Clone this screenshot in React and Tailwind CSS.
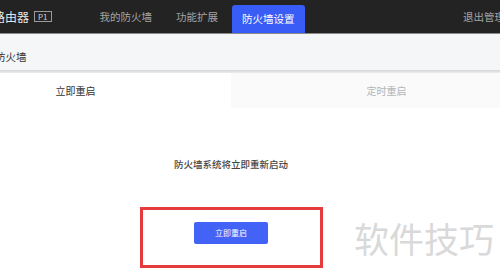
export default function App() {
  return (
    <div
      className="relative w-[500px] h-[277px] overflow-hidden bg-white"
      style={{ fontFamily: '"Noto Sans CJK SC", "Noto Sans", sans-serif' }}
    >
      {/* Top bar */}
      <header className="flex items-end h-[34px] bg-[#232323] border-b border-[#8a8a8a] whitespace-nowrap">
        <div className="flex items-center self-stretch ml-[-7px]">
          <span className="text-[12px] leading-none text-[#e6e6e6]">路由器</span>
          <span className="ml-[5px] px-[3px] border border-[#9a9a9a] text-[8px] leading-[9px] text-[#cfcfcf]">P1</span>
        </div>
        <nav className="flex items-end ml-[36px] h-full">
          <a className="flex items-center h-full px-[12px] text-[10.5px] text-[#a5a5a5]">我的防火墙</a>
          <a className="flex items-center h-full px-[12px] text-[10.5px] text-[#a5a5a5]">功能扩展</a>
          <a className="flex items-center h-[28px] ml-[2px] px-[10px] rounded-t-[3px] bg-[#3a5cf6] text-[10.5px] text-white">防火墙设置</a>
        </nav>
        <a className="flex items-center self-stretch ml-auto mr-[-5px] text-[10.5px] text-[#a5a5a5]">退出管理</a>
      </header>

      {/* Breadcrumb band */}
      <div className="flex items-end h-[36px] bg-[#f5f6f8] pb-[5px]">
        <span className="ml-[-5px] text-[10.5px] text-[#333]">防火墙</span>
      </div>
      <div className="h-[3px] bg-gradient-to-b from-[#d6d6d6] to-[#ececec]" />

      {/* Page body, wider than the window */}
      <div className="ml-[-80px] w-[622px]">
        <div className="grid grid-cols-2 h-[35px]">
          <div className="flex items-center justify-center bg-white text-[10px] text-[#333]">立即重启</div>
          <div className="flex items-center justify-center bg-[#fafafa] text-[10px] text-[#b5b5b5]">定时重启</div>
        </div>

        <div className="flex flex-col items-center pt-[50px]">
          <p className="text-[9.5px] leading-[12px] font-medium text-[#444]">防火墙系统将立即重新启动</p>
          <div className="mt-[37px] flex justify-center w-[183px] h-[61px] pt-[12px] border-[3px] border-[#e63b3d]">
            <button className="w-[74px] h-[22px] rounded-[2px] bg-[#4263f5] text-[8px] text-white">立即重启</button>
          </div>
        </div>
      </div>

      {/* Watermark */}
      <div className="absolute left-[354px] top-[213px] text-[35px] leading-[50px] text-[#d9d9d9] whitespace-nowrap">
        软件技巧
      </div>
    </div>
  );
}
